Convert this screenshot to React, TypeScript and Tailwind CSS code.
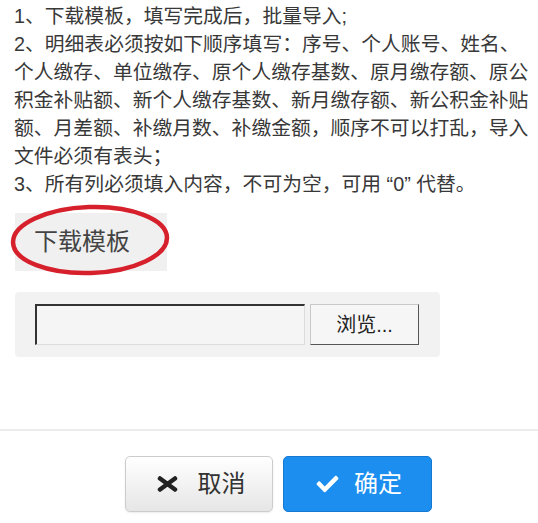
import { FaCheck } from "react-icons/fa";

const lines = [
  "1、下载模板，填写完成后，批量导入;",
  "2、明细表必须按如下顺序填写：序号、个人账号、姓名、",
  "个人缴存、单位缴存、原个人缴存基数、原月缴存额、原公",
  "积金补贴额、新个人缴存基数、新月缴存额、新公积金补贴",
  "额、月差额、补缴月数、补缴金额，顺序不可以打乱，导入",
  "文件必须有表头；",
  "3、所有列必须填入内容，不可为空，可用 “0” 代替。",
];

export default function App() {
  return (
    <div
      className="w-[538px] h-[523px] bg-white overflow-hidden text-[#333]"
      style={{ fontFamily: '"Liberation Sans", "Noto Sans CJK SC", sans-serif' }}
    >
      {/* Instructions */}
      <div className="pl-[14px] pt-[2px] text-[19.8px] leading-[28px] text-[#383838]">
        {lines.map((line) => (
          <div key={line} className="whitespace-nowrap">{line}</div>
        ))}
      </div>

      {/* Download template, circled */}
      <div className="relative ml-[15px] mt-[15px] w-[152px]">
        <div className="h-[58px] w-[152px] bg-[#f0f0f0] flex items-center pl-[19px] text-[24px] text-[#444]">
          下载模板
        </div>
        <svg className="absolute left-[-7px] top-[-10px]" width="164" height="74" viewBox="0 0 164 74">
          <ellipse cx="82" cy="37" rx="77" ry="33" fill="none" stroke="#d6202b" strokeWidth="4.5" transform="rotate(-2 82 37)" />
        </svg>
      </div>

      {/* File picker */}
      <div className="ml-[15px] mt-[21px] w-[425px] h-[65px] bg-[#f2f2f2] rounded-[4px] flex items-center gap-[5px] pl-[20px]">
        <div className="w-[270px] h-[41px] bg-[#f5f5f5] border-t-2 border-l-2 border-b border-r border-t-[#333] border-l-[#333] border-b-[#dcdcdc] border-r-[#dcdcdc]" />
        <div className="w-[109px] h-[41px] bg-[#f6f6f6] border border-[#c8c8c8] border-b-[#555] border-r-[#555] flex items-center justify-center text-[20px] text-[#222]">
          浏览...
        </div>
      </div>

      {/* Divider */}
      <div className="mt-[72px] border-t-2 border-[#ececec]" />

      {/* Actions */}
      <div className="mt-[25px] pl-[125px] flex gap-[10px]">
        <button className="w-[148px] h-[56px] rounded-[5px] border border-[#cccccc] bg-gradient-to-b from-white to-[#e6e6e6] shadow-[0_1px_2px_rgba(0,0,0,0.08)] flex items-center justify-center gap-[20px] pl-[4px] text-[24px] text-[#333]">
          <svg width="21" height="16" viewBox="0 0 21 16">
            <path d="M3 2.5 L18 13.5 M18 2.5 L3 13.5" stroke="#222" strokeWidth="4.5" strokeLinecap="round" />
          </svg>
          <span>取消</span>
        </button>
        <button className="w-[149px] h-[56px] rounded-[5px] border border-[#1579d2] bg-[#1b8ef0] flex items-center justify-center gap-[14px] pl-[2px] text-[24px] text-white">
          <FaCheck className="w-[25px] h-[22px]" />
          <span>确定</span>
        </button>
      </div>
    </div>
  );
}
